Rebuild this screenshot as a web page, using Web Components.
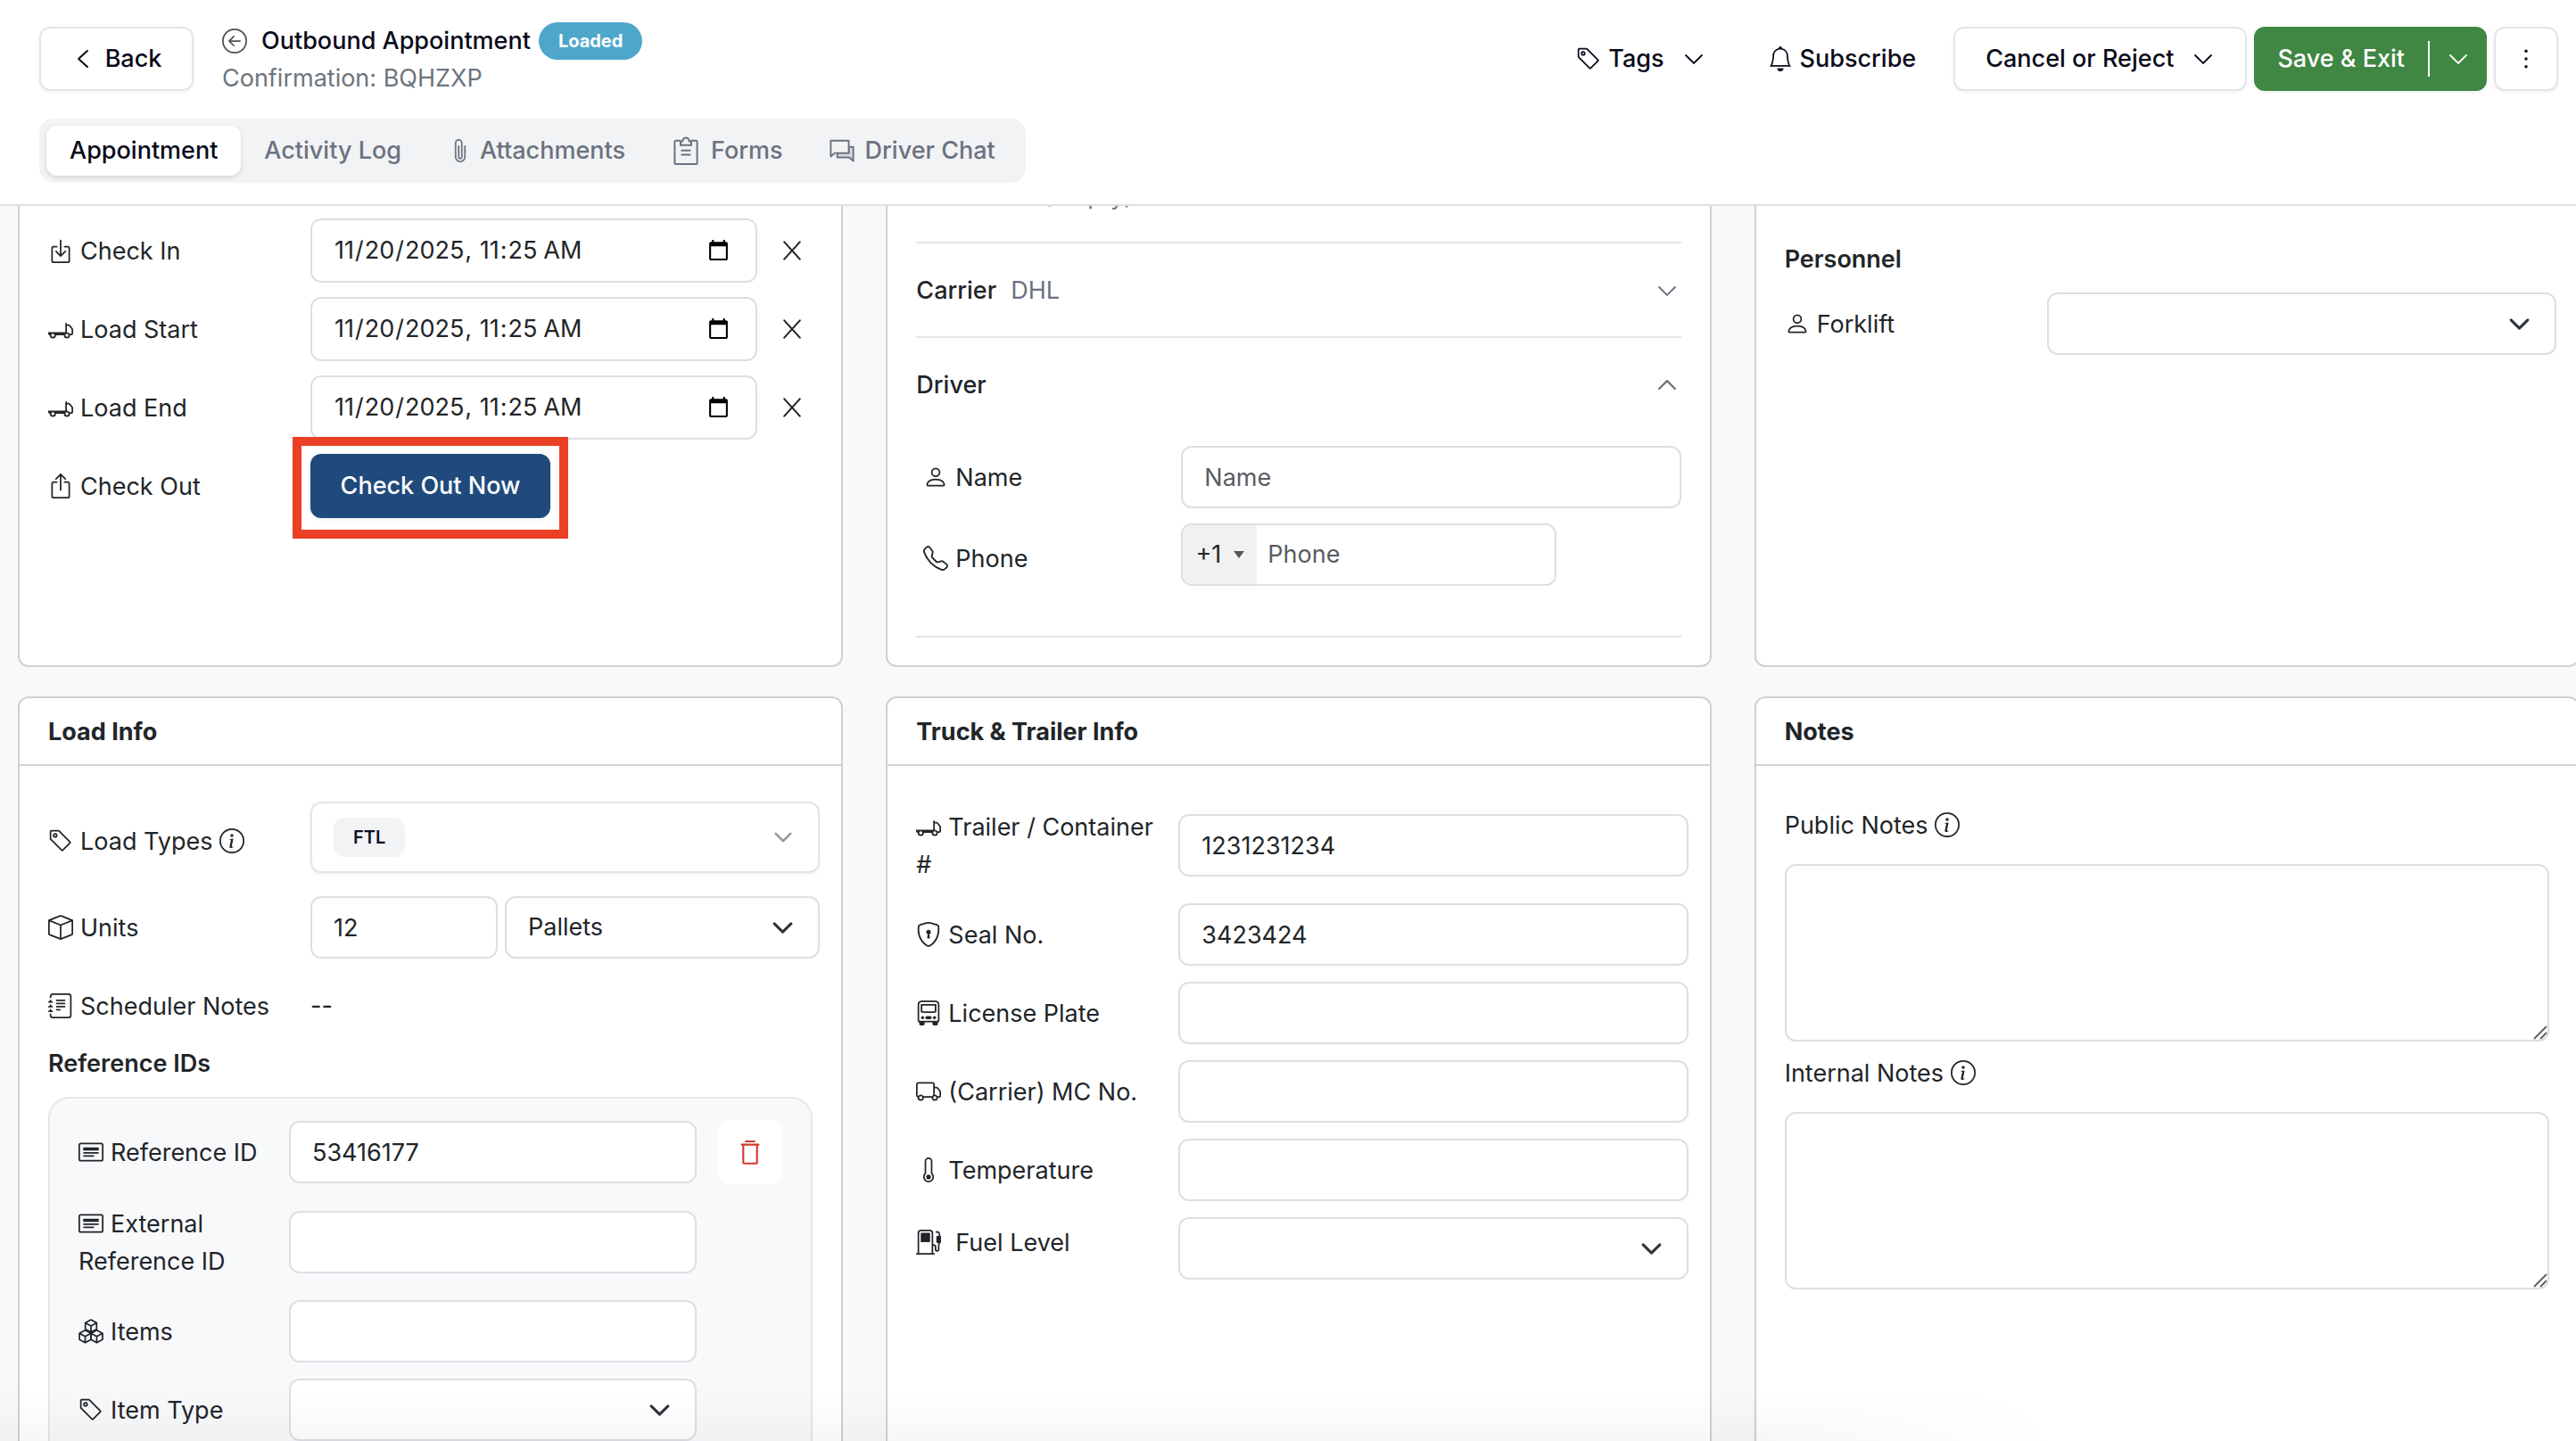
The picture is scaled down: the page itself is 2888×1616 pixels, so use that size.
<!DOCTYPE html>
<html lang="en">
<head>
<meta charset="UTF-8">
<meta name="viewport" content="width=device-width, initial-scale=1">
<title>Outbound Appointment</title>
<style>
    html, body {
        margin: 0;
        height: 100%;
    }
    body {
        --line: #dedfe4;
        --card-line: #cfd1d4;
        --muted: #6b7280;
        --ink: #212529;
        --page: #f8f9fb;
        font-family: Inter, "Liberation Sans", sans-serif;
        font-size: 27px;
        line-height: 42px;
        color: var(--ink);
        background: var(--page);
        overflow: hidden;
    }
</style>
</head>
<body>
<appointment-page></appointment-page>

<script>
    const ICONS = {
        'arrow-left-circle': '<path d="M1 8a7 7 0 1 0 14 0A7 7 0 0 0 1 8m15 0A8 8 0 1 1 0 8a8 8 0 0 1 16 0m-4.5-.5a.5.5 0 0 1 0 1H5.707l2.147 2.146a.5.5 0 0 1-.708.708l-3-3a.5.5 0 0 1 0-.708l3-3a.5.5 0 1 1 .708.708L5.707 7.5z"/>',
        'chevron-left': '<path d="M11 2.5 5 8l6 5.5" fill="none" stroke="currentColor" stroke-width="1.3" stroke-linecap="round" stroke-linejoin="round"/>',
        'chevron-down': '<path d="m2.5 5.5 5.5 5.5 5.5-5.5" fill="none" stroke="currentColor" stroke-width="1.2" stroke-linecap="round" stroke-linejoin="round"/>',
        'chevron-up': '<path d="m2.5 10.5 5.5-5.5 5.5 5.5" fill="none" stroke="currentColor" stroke-width="1.4" stroke-linecap="round" stroke-linejoin="round"/>',
        'chevron-select': '<path d="m2 5 6 6 6-6" fill="none" stroke="currentColor" stroke-width="2" stroke-linecap="round" stroke-linejoin="round"/>',
        'tag': '<path d="M6 4.5a1.5 1.5 0 1 1-3 0 1.5 1.5 0 0 1 3 0m-1 0a.5.5 0 1 0-1 0 .5.5 0 0 0 1 0"/><path d="M2 1h4.586a1 1 0 0 1 .707.293l7 7a1 1 0 0 1 0 1.414l-4.586 4.586a1 1 0 0 1-1.414 0l-7-7A1 1 0 0 1 1 6.586V2a1 1 0 0 1 1-1m0 5.586 7 7L13.586 9l-7-7H2z"/>',
        'bell': '<path d="M8 16a2 2 0 0 0 2-2H6a2 2 0 0 0 2 2M8 1.918l-.797.161A4 4 0 0 0 4 6c0 .628-.134 2.197-.459 3.742-.16.767-.376 1.566-.663 2.258h10.244c-.287-.692-.502-1.49-.663-2.258C12.134 8.197 12 6.628 12 6a4 4 0 0 0-3.203-3.92zM14.22 12c.223.447.481.801.78 1H1c.299-.199.557-.553.78-1C2.68 10.2 3 6.88 3 6c0-2.42 1.72-4.44 4.005-4.901a1 1 0 1 1 1.99 0A5 5 0 0 1 13 6c0 .88.32 4.2 1.22 6"/>',
        'dots': '<circle cx="8" cy="3" r="1"/><circle cx="8" cy="8" r="1"/><circle cx="8" cy="13" r="1"/>',
        'paperclip': '<path d="M4.5 3a2.5 2.5 0 0 1 5 0v9a1.5 1.5 0 0 1-3 0V5a.5.5 0 0 1 1 0v7a.5.5 0 0 0 1 0V3a1.5 1.5 0 1 0-3 0v9a2.5 2.5 0 0 0 5 0V5a.5.5 0 0 1 1 0v7a3.5 3.5 0 1 1-7 0z"/>',
        'clipboard': '<g fill="none" stroke="currentColor" stroke-width="1"><path d="M5.2 2.4H2.3q-.6 0-.6.6v11.9q0 .6.6.6h11.4q.6 0 .6-.6V3q0-.6-.6-.6h-2.9"/><path d="M5 4.9V3.2q0-.5.5-.5h.6Q6.5.8 8 .8t1.9 1.9h.6q.5 0 .5.5v1.7z"/><path d="M5.300 7.900h5.400M5.300 10.300h5.400"/></g>',
        'chat': '<g fill="none" stroke="currentColor" stroke-width="1.100" stroke-linejoin="round"><path d="M12.300 5.600h2.900v9l-2.500-2.300H5V9.500h7.300z" fill="#d9dbe0"/><path d="M.8 1.600h11.500v7.900H3.300L.8 11.700z" fill="#f2f3f5"/></g>',
        'box-in': '<path d="M3.5 6a.5.5 0 0 0-.5.5v8a.5.5 0 0 0 .5.5h9a.5.5 0 0 0 .5-.5v-8a.5.5 0 0 0-.5-.5h-2a.5.5 0 0 1 0-1h2A1.500 1.500 0 0 1 14 6.500v8a1.500 1.500 0 0 1-1.500 1.500h-9A1.500 1.500 0 0 1 2 14.500v-8A1.500 1.500 0 0 1 3.500 5h2a.5.5 0 0 1 0 1z"/><path d="M7.646 11.854a.5.5 0 0 0 .708 0l3-3a.5.5 0 0 0-.708-.708L8.500 10.293V1.500a.5.5 0 0 0-1 0v8.793L5.354 8.146a.5.5 0 1 0-.708.708z"/>',
        'box-out': '<path d="M3.5 6a.5.5 0 0 0-.5.5v8a.5.5 0 0 0 .5.5h9a.5.5 0 0 0 .5-.5v-8a.5.5 0 0 0-.5-.5h-2a.5.5 0 0 1 0-1h2A1.500 1.500 0 0 1 14 6.500v8a1.500 1.500 0 0 1-1.500 1.500h-9A1.500 1.500 0 0 1 2 14.500v-8A1.500 1.500 0 0 1 3.500 5h2a.5.5 0 0 1 0 1z"/><path d="M7.646.146a.5.5 0 0 1 .708 0l3 3a.5.5 0 0 1-.708.708L8.500 1.707V10.500a.5.5 0 0 1-1 0V1.707L5.354 3.854a.5.5 0 1 1-.708-.708z"/>',
        'truck-flatbed': '<path d="M11.500 4a.5.5 0 0 1 .5.5V5h1.020a1.500 1.500 0 0 1 1.170.563l1.481 1.850a1.500 1.500 0 0 1 .329.938V10.500a1.500 1.500 0 0 1-1.500 1.500H14a2 2 0 1 1-4 0H5a2 2 0 1 1-4 0 1 1 0 0 1-1-1v-1h11V4.500a.5.5 0 0 1 .5-.5M3 11a1 1 0 1 0 0 2 1 1 0 0 0 0-2m9 0a1 1 0 1 0 0 2 1 1 0 0 0 0-2m1.732 0h.768a.5.5 0 0 0 .5-.5V8.350a.5.5 0 0 0-.11-.312l-1.480-1.850A.5.5 0 0 0 13.020 6H12v4a2 2 0 0 1 1.732 1"/>',
        'truck': '<path d="M0 3.500A1.500 1.500 0 0 1 1.500 2h9A1.500 1.500 0 0 1 12 3.500V5h1.020a1.500 1.500 0 0 1 1.170.563l1.481 1.850a1.500 1.500 0 0 1 .329.938V10.500a1.500 1.500 0 0 1-1.500 1.500H14a2 2 0 1 1-4 0H5a2 2 0 1 1-3.998-.085A1.500 1.500 0 0 1 0 10.500zm1.294 7.456A2 2 0 0 1 4.732 11h5.536a2 2 0 0 1 .732-.732V3.500a.5.5 0 0 0-.5-.5h-9a.5.5 0 0 0-.5.5v7a.5.5 0 0 0 .294.456M12 10a2 2 0 0 1 1.732 1h.768a.5.5 0 0 0 .5-.5V8.350a.5.5 0 0 0-.11-.312l-1.480-1.850A.5.5 0 0 0 13.020 6H12zm-9 1a1 1 0 1 0 0 2 1 1 0 0 0 0-2m9 0a1 1 0 1 0 0 2 1 1 0 0 0 0-2"/>',
        'x': '<path d="M3 2.500 13 13.500M13 2.500 3 13.500" fill="none" stroke="currentColor" stroke-width="1.200" stroke-linecap="round"/>',
        'person': '<path d="M8 8a3 3 0 1 0 0-6 3 3 0 0 0 0 6m2-3a2 2 0 1 1-4 0 2 2 0 0 1 4 0m4 8c0 1-1 1-1 1H3s-1 0-1-1 1-4 6-4 6 3 6 4m-1-.004c-.001-.246-.154-.986-.832-1.664C11.516 10.680 10.289 10 8 10s-3.516.680-4.168 1.332c-.678.678-.830 1.418-.832 1.664z"/>',
        'telephone': '<path d="M3.654 1.328a.678.678 0 0 0-1.015-.063L1.605 2.300c-.483.484-.661 1.169-.450 1.770a17.600 17.600 0 0 0 4.168 6.608 17.600 17.600 0 0 0 6.608 4.168c.601.211 1.286.033 1.770-.450l1.034-1.034a.678.678 0 0 0-.063-1.015l-2.307-1.794a.680.680 0 0 0-.580-.122l-2.190.547a1.750 1.750 0 0 1-1.657-.459L5.482 8.062a1.750 1.750 0 0 1-.460-1.657l.548-2.190a.680.680 0 0 0-.122-.580zM1.884.511a1.745 1.745 0 0 1 2.612.163L6.290 2.980c.329.423.445.974.315 1.494l-.547 2.190a.680.680 0 0 0 .178.643l2.457 2.457a.680.680 0 0 0 .644.178l2.189-.547a1.750 1.750 0 0 1 1.494.315l2.306 1.794c.829.645.905 1.870.163 2.611l-1.034 1.034c-.740.740-1.846 1.065-2.877.702a18.600 18.600 0 0 1-7.010-4.420 18.600 18.600 0 0 1-4.420-7.009c-.362-1.030-.037-2.137.703-2.877z"/>',
        'info': '<path d="M8 15A7 7 0 1 1 8 1a7 7 0 0 1 0 14m0 1A8 8 0 1 0 8 0a8 8 0 0 0 0 16"/><path d="m8.930 6.588-2.290.287-.082.380.450.083c.294.070.352.176.288.469l-.738 3.468c-.194.897.105 1.319.808 1.319.545 0 1.178-.252 1.465-.598l.088-.416c-.200.176-.492.246-.686.246-.275 0-.375-.193-.304-.533zM9 4.500a1 1 0 1 1-2 0 1 1 0 0 1 2 0"/>',
        'box': '<path d="M8.186 1.113a.5.5 0 0 0-.372 0L1.846 3.500 8 5.961 14.154 3.500zM15 4.239l-6.500 2.600v7.922l6.500-2.600V4.240zM7.500 14.762V6.838L1 4.239v7.923zM7.443.184a1.500 1.500 0 0 1 1.114 0l7.129 2.852A.5.5 0 0 1 16 3.500v8.662a1 1 0 0 1-.629.928l-7.185 2.874a.5.5 0 0 1-.372 0L.630 13.090a1 1 0 0 1-.630-.928V3.500a.5.5 0 0 1 .314-.464z"/>',
        'journal': '<path d="M3 0h10a2 2 0 0 1 2 2v12a2 2 0 0 1-2 2H3a2 2 0 0 1-2-2v-1h1v1a1 1 0 0 0 1 1h10a1 1 0 0 0 1-1V2a1 1 0 0 0-1-1H3a1 1 0 0 0-1 1v1H1V2a2 2 0 0 1 2-2"/><path d="M1 5v-.5a.5.5 0 0 1 1 0V5h.5a.5.5 0 0 1 0 1h-2a.5.5 0 0 1 0-1zm0 3v-.5a.5.5 0 0 1 1 0V8h.5a.5.5 0 0 1 0 1h-2a.5.5 0 0 1 0-1zm0 3v-.5a.5.5 0 0 1 1 0v.5h.5a.5.5 0 0 1 0 1h-2a.5.5 0 0 1 0-1z"/><path d="M5.500 4.500h5M5.500 6.500h5M5.500 8.500h5M5.500 10.500h2" fill="none" stroke="currentColor" stroke-linecap="round"/>',
        'card': '<path d="M14.500 3a.5.5 0 0 1 .5.5v9a.5.5 0 0 1-.5.5h-13a.5.5 0 0 1-.5-.5v-9a.5.5 0 0 1 .5-.5zm-13-1A1.500 1.500 0 0 0 0 3.500v9A1.500 1.500 0 0 0 1.500 14h13a1.500 1.500 0 0 0 1.500-1.500v-9A1.500 1.500 0 0 0 14.500 2z"/><path d="M3 8.500a.5.5 0 0 1 .5-.5h9a.5.5 0 0 1 0 1h-9a.5.5 0 0 1-.5-.5m0 2a.5.5 0 0 1 .5-.5h6a.5.5 0 0 1 0 1h-6a.5.5 0 0 1-.5-.5m0-5a.5.5 0 0 1 .5-.5h9a.5.5 0 0 1 .5.5v1a.5.5 0 0 1-.5.5h-9a.5.5 0 0 1-.5-.5z"/>',
        'boxes': '<g fill="none" stroke="currentColor" stroke-width="1" stroke-linejoin="round"><path d="M8 .6 11.600 2.600v4L8 8.600 4.400 6.600v-4zM4.400 2.600 8 4.600l3.600-2M8 4.600v4"/><path d="M4.300 7.300 8 9.300v4l-3.700 2-3.700-2v-4zM.6 9.300l3.700 2L8 9.300M4.300 11.300v4"/><path d="m11.700 7.300 3.700 2v4l-3.700 2-3.700-2v-4zM8 9.300l3.700 2 3.700-2M11.700 11.300v4"/></g>',
        'trash': '<path d="M5.200 1.100h5.600M2.600 3.200h10.800M3.600 3.400v11.400q0 .5.5.5h7.800q.5 0 .5-.5V3.400" fill="none" stroke="currentColor" stroke-width="1.200" stroke-linecap="round"/>',
        'shield': '<path d="M5.338 1.590a61 61 0 0 0-2.837.856.480.480 0 0 0-.328.390c-.554 4.157.726 7.190 2.253 9.188a10.700 10.700 0 0 0 2.287 2.233c.346.244.652.420.893.533q.180.085.293.118a1 1 0 0 0 .101.025 1 1 0 0 0 .1-.025q.114-.034.294-.118c.240-.113.547-.290.893-.533a10.700 10.700 0 0 0 2.287-2.233c1.527-1.997 2.807-5.031 2.253-9.188a.480.480 0 0 0-.328-.390c-.651-.213-1.750-.560-2.837-.855C9.552 1.290 8.531 1.067 8 1.067c-.530 0-1.552.223-2.662.524zM5.072.560C6.157.265 7.310 0 8 0s1.843.265 2.928.560c1.110.300 2.229.655 2.887.870a1.540 1.540 0 0 1 1.044 1.262c.596 4.477-.787 7.795-2.465 9.990a11.800 11.800 0 0 1-2.517 2.453 7 7 0 0 1-1.048.625c-.280.132-.581.240-.829.240s-.548-.108-.829-.240a7 7 0 0 1-1.048-.625 11.800 11.800 0 0 1-2.517-2.453C1.928 10.487.545 7.169 1.141 2.692A1.540 1.540 0 0 1 2.185 1.430 63 63 0 0 1 5.072.560"/><path d="M9.500 6.500a1.500 1.500 0 0 1-1 1.415l.385 1.990a.5.5 0 0 1-.491.595h-.788a.5.5 0 0 1-.490-.595l.384-1.990a1.500 1.500 0 1 1 2-1.415"/>',
        'bus': '<path d="M3.600.5h8.800q2.100.2 2.100 2.500v9.500q0 1-1 1h-11q-1 0-1-1V3Q1.500.7 3.600.5z" fill="none" stroke="currentColor"/><path d="M3.500 2.800h9v4.400q-4.500.7-9 0z" fill="none" stroke="currentColor"/><circle cx="4.200" cy="11" r="1"/><circle cx="11.800" cy="11" r="1"/><rect x="6" y="10" width="4" height="2" rx="1"/><path d="M2 13.500h3.500V15q0 1-1 1H3q-1 0-1-1zM10.500 13.500H14V15q0 1-1 1h-1.500q-1 0-1-1z"/>',
        'thermometer': '<path d="M9.500 12.500a1.500 1.500 0 1 1-3 0 1.500 1.500 0 0 1 3 0"/><path d="M8 0a2.500 2.500 0 0 0-2.500 2.500v7.550a3.500 3.500 0 1 0 5 0V2.500A2.500 2.500 0 0 0 8 0M6.500 2.500a1.500 1.500 0 1 1 3 0v7.987l.167.150a2.500 2.500 0 1 1-3.333 0l.166-.150z"/>',
        'fuel': '<path d="M1.500 15.500V2.200Q1.500.5 3.200.5h5.600q1.700 0 1.700 1.700v13.300M.5 15.500h11" fill="none" stroke="currentColor" stroke-linecap="round"/><rect x="3" y="2" width="6" height="6" rx=".5"/><path d="M13 1.500h1q1 .2 1 1.500v5q0 1-.5 1.600v3q0 1-1 1t-1-1V11q0-1-1.500-1.200" fill="none" stroke="currentColor" stroke-linecap="round"/><rect x="13" y="4" width="3" height="4.500" rx=".6"/>'
    };

    class AppIcon extends HTMLElement {
        constructor() {
            super();
            this.attachShadow({ mode: 'open' });
        }
        connectedCallback() {
            this.shadowRoot.innerHTML = `
                <style>
                    :host {
                        display: inline-block;
                        flex: none;
                        width: 28px;
                        height: 28px;
                        vertical-align: -4px;
                    }
                    svg {
                        display: block;
                        width: 100%;
                        height: 100%;
                        fill: currentColor;
                    }
                </style>
                <svg viewBox="0 0 16 16" aria-hidden="true">${ICONS[this.getAttribute('name')]}</svg>
            `;
        }
    }
    customElements.define('app-icon', AppIcon);

    class AppButton extends HTMLElement {
        constructor() {
            super();
            this.attachShadow({ mode: 'open' });
        }
        connectedCallback() {
            const name = this.getAttribute('label');
            this.shadowRoot.innerHTML = `
                <style>
                    :host { display: block; }
                    button {
                        display: flex;
                        align-items: center;
                        justify-content: center;
                        gap: 8px;
                        box-sizing: border-box;
                        width: 100%;
                        height: 72px;
                        padding: 0 34px;
                        border: 2px solid #e4e5ea;
                        border-radius: 12px;
                        background: #fff;
                        box-shadow: 0 2px 4px rgba(0, 0, 0, 0.05);
                        font: inherit;
                        font-weight: 500;
                        color: #090b1a;
                        white-space: nowrap;
                    }
                    :host([kind="plain"]) button {
                        padding: 0 16px;
                        border-color: transparent;
                        background: none;
                        box-shadow: none;
                    }
                    :host([kind="primary"]) button {
                        padding: 0;
                        border-color: #1f4a7b;
                        background: #1f4a7b;
                        color: #fff;
                    }
                    :host([kind="icon"]) button {
                        width: 72px;
                        padding: 0;
                    }
                    :host([kind="danger"]) button {
                        width: 72px;
                        padding: 0;
                        border-color: #fff;
                        box-shadow: none;
                        color: #d13a32;
                    }
                </style>
                <button type="button" ${name ? `aria-label="${name}"` : ''}><slot></slot></button>
            `;
        }
    }
    customElements.define('app-button', AppButton);

    class SplitButton extends HTMLElement {
        constructor() {
            super();
            this.attachShadow({ mode: 'open' });
        }
        connectedCallback() {
            this.shadowRoot.innerHTML = `
                <style>
                    :host {
                        display: flex;
                        align-items: center;
                        height: 72px;
                        border-radius: 12px;
                        background: #3f8743;
                        box-shadow: 0 2px 4px rgba(0, 0, 0, 0.05);
                    }
                    button {
                        display: flex;
                        align-items: center;
                        justify-content: center;
                        height: 72px;
                        border: 0;
                        background: none;
                        font: inherit;
                        font-weight: 500;
                        color: #fff;
                        white-space: nowrap;
                    }
                    .main { padding: 0 26px; }
                    .more { width: 64px; padding: 0; }
                    i {
                        width: 2px;
                        height: 40px;
                        background: #fff;
                    }
                    app-icon { width: 26px; height: 26px; }
                </style>
                <button class="main" type="button"><slot></slot></button>
                <i></i>
                <button class="more" type="button" aria-label="More save options"><app-icon name="chevron-down"></app-icon></button>
            `;
        }
    }
    customElements.define('split-button', SplitButton);

    class PageHeader extends HTMLElement {
        constructor() {
            super();
            this.attachShadow({ mode: 'open' });
        }
        connectedCallback() {
            this.shadowRoot.innerHTML = `
                <style>
                    :host {
                        display: block;
                        box-sizing: border-box;
                        flex: none;
                        padding: 24px 20px 24px 44px;
                        border-bottom: 2px solid var(--line);
                        background: #fff;
                    }
                    .top {
                        display: flex;
                        align-items: center;
                        gap: 32px;
                        height: 84px;
                    }
                    .title {
                        flex: 1;
                        min-width: 0;
                        padding-top: 2px;
                    }
                    h1 {
                        display: flex;
                        align-items: center;
                        margin: 0;
                        font-size: inherit;
                        font-weight: 500;
                        color: #090b1a;
                    }
                    h1 app-icon {
                        margin-right: 16px;
                        color: #4b5057;
                    }
                    .badge {
                        margin-left: 9px;
                        padding: 0 22px;
                        border-radius: 21px;
                        background: #4ea6cb;
                        font-size: 20px;
                        font-weight: 700;
                        color: #fff;
                    }
                    .title p {
                        margin: 0;
                        color: #6c757d;
                    }
                    .actions {
                        display: flex;
                        gap: 8px;
                    }
                    .tags { margin-right: 26px; }
                    .subscribe { margin-right: 16px; }
                    .chev {
                        width: 26px;
                        height: 26px;
                        margin-left: 12px;
                    }
                    .back { width: 173px; }
                    .back app-icon {
                        width: 26px;
                        height: 26px;
                        margin-right: 4px;
                    }
                    nav {
                        display: inline-flex;
                        box-sizing: border-box;
                        margin-top: 25px;
                        padding: 8px;
                        border-radius: 16px;
                        background: #f2f3f5;
                    }
                    nav a {
                        display: flex;
                        align-items: center;
                        gap: 8px;
                        height: 56px;
                        padding: 0 26px;
                        border-radius: 12px;
                        font-weight: 500;
                        color: var(--muted);
                        text-decoration: none;
                    }
                    nav a[aria-current] {
                        background: #fff;
                        box-shadow: 0 2px 5px rgba(0, 0, 0, 0.14);
                        color: #090b1a;
                    }
                    nav .wide { gap: 12px; }
                    nav .big {
                        width: 32px;
                        height: 32px;
                    }
                </style>
                <div class="top">
                    <app-button class="back"><app-icon name="chevron-left"></app-icon>Back</app-button>
                    <div class="title">
                        <h1><app-icon name="arrow-left-circle"></app-icon>Outbound Appointment<span class="badge">Loaded</span></h1>
                        <p>Confirmation: BQHZXP</p>
                    </div>
                    <div class="actions">
                        <app-button kind="plain" class="tags"><app-icon name="tag"></app-icon>Tags<app-icon class="chev" name="chevron-down"></app-icon></app-button>
                        <app-button kind="plain" class="subscribe"><app-icon name="bell"></app-icon>Subscribe</app-button>
                        <app-button>Cancel or Reject<app-icon class="chev" name="chevron-down"></app-icon></app-button>
                        <split-button>Save &amp; Exit</split-button>
                        <app-button kind="icon" label="More actions"><app-icon name="dots"></app-icon></app-button>
                    </div>
                </div>
                <nav>
                    <a href="#appointment" aria-current="page">Appointment</a>
                    <a href="#activity">Activity Log</a>
                    <a href="#attachments"><app-icon name="paperclip"></app-icon>Attachments</a>
                    <a href="#forms" class="wide"><app-icon class="big" name="clipboard"></app-icon>Forms</a>
                    <a href="#chat" class="wide"><app-icon name="chat"></app-icon>Driver Chat</a>
                </nav>
            `;
        }
    }
    customElements.define('page-header', PageHeader);

    class InfoCard extends HTMLElement {
        constructor() {
            super();
            this.attachShadow({ mode: 'open' });
        }
        connectedCallback() {
            const title = this.getAttribute('heading');
            this.shadowRoot.innerHTML = `
                <style>
                    :host {
                        display: block;
                        box-sizing: border-box;
                        min-width: 0;
                        border: 2px solid var(--card-line);
                        border-radius: 12px;
                        background: #fff;
                    }
                    h2 {
                        margin: 0;
                        padding: 17px 32px 15px;
                        border-bottom: 2px solid var(--card-line);
                        font-size: inherit;
                        font-weight: 700;
                    }
                    .body {
                        display: flex;
                        flex-direction: column;
                        gap: var(--card-gap, 18px);
                        padding: var(--card-padding, 40px 24px 40px 32px);
                    }
                </style>
                ${title ? `<h2>${title}</h2>` : ''}
                <div class="body"><slot></slot></div>
            `;
        }
    }
    customElements.define('info-card', InfoCard);

    // One label + control line; "type" picks the control, "clear" adds the X button
    class FieldRow extends HTMLElement {
        constructor() {
            super();
            this.attachShadow({ mode: 'open' });
        }
        control() {
            const value = this.getAttribute('value') || '';
            const hint = this.getAttribute('placeholder') || '';
            switch (this.getAttribute('type')) {
                case 'datetime':
                    return `<input id="field" type="datetime-local" value="${value}">`;
                case 'select':
                    return `<span class="select"><select id="field"><option>${value}</option></select><app-icon name="chevron-select"></app-icon></span>`;
                case 'units':
                    return `<input id="field" class="count" type="text" value="${value}">
                        <span class="select"><select aria-label="Unit type"><option>Pallets</option></select><app-icon name="chevron-select"></app-icon></span>`;
                case 'chips':
                    return `<button id="field" class="chips" type="button"><span class="chip">${value}</span><app-icon name="chevron-select"></app-icon></button>`;
                case 'phone':
                    return `<span class="phone"><button type="button" aria-label="Country code">+1<i></i></button><input id="field" type="tel" placeholder="${hint}"></span>`;
                case 'text':
                    return `<output id="field">${value}</output>`;
                case 'slot':
                    return '<slot></slot>';
                default:
                    return `<input id="field" type="text" value="${value}" placeholder="${hint}">`;
            }
        }
        render() {
            const info = this.hasAttribute('info') ? ' <app-icon class="info" name="info"></app-icon>' : '';
            const clear = this.hasAttribute('clear')
                ? '<button class="clear" type="button" aria-label="Clear"><app-icon name="x"></app-icon></button>' : '';
            this.shadowRoot.innerHTML = `
                <style>
                    :host {
                        display: flex;
                        align-items: center;
                        min-height: 70px;
                    }
                    label {
                        box-sizing: border-box;
                        flex: none;
                        width: var(--label-width, 294px);
                        padding: 6px 16px 4px 0;
                    }
                    label app-icon { margin-right: 8px; }
                    label .info { margin: 0; }
                    .controls {
                        display: flex;
                        align-items: center;
                        gap: 8px;
                        flex: 1;
                        min-width: 0;
                    }
                    input, select, .chips, .phone {
                        box-sizing: border-box;
                        width: 100%;
                        min-width: 0;
                        height: 70px;
                        margin: 0;
                        padding: 0 24px;
                        border: 2px solid var(--line);
                        border-radius: 12px;
                        background: #fff;
                        font: inherit;
                        color: inherit;
                    }
                    input::placeholder {
                        color: #595c5f;
                        opacity: 1;
                    }
                    input[type="datetime-local"] {
                        height: 72px;
                        padding-right: 26px;
                    }
                    select { appearance: none; }
                    .count { width: 210px; flex: none; }
                    .select {
                        position: relative;
                        display: block;
                        flex: 1;
                        min-width: 0;
                    }
                    .select app-icon {
                        position: absolute;
                        top: 23px;
                        right: 29px;
                        width: 25px;
                        height: 25px;
                        color: #30363c;
                        pointer-events: none;
                    }
                    .chips {
                        display: flex;
                        align-items: center;
                        justify-content: space-between;
                        height: 80px;
                        border-color: #e4e5ea;
                        box-shadow: 0 2px 4px rgba(0, 0, 0, 0.05);
                    }
                    .chips app-icon {
                        width: 22px;
                        height: 22px;
                        margin-right: 4px;
                        color: #999;
                    }
                    .chip {
                        padding: 1px 22px;
                        border-radius: 12px;
                        background: #f2f3f5;
                        font-size: 20px;
                        font-weight: 600;
                        color: #0b1026;
                    }
                    .phone {
                        display: flex;
                        width: 75%;
                        padding: 0;
                        overflow: hidden;
                    }
                    .phone button {
                        display: flex;
                        align-items: center;
                        justify-content: center;
                        gap: 14px;
                        flex: none;
                        width: 83px;
                        padding: 0;
                        border: 0;
                        background: #f1f1f1;
                        font: inherit;
                        color: inherit;
                    }
                    .phone i {
                        border: 6px solid transparent;
                        border-top: 8px solid #555;
                        border-bottom: 0;
                    }
                    .phone input {
                        flex: 1;
                        height: auto;
                        padding: 0 12px;
                        border: 0;
                    }
                    .clear {
                        flex: none;
                        width: 50px;
                        height: 50px;
                        margin: 0 6px;
                        padding: 0;
                        border: 0;
                        background: none;
                        color: inherit;
                    }
                    :host([align="top"]) label {
                        align-self: flex-start;
                        padding-top: 8px;
                    }
                    :host([align="top"]) label app-icon { margin-right: 16px; }
                    :host([align="low"]) { min-height: 78px; }
                    :host([type="chips"]) { min-height: 88px; }
                    :host([type="chips"]) .controls,
                    :host([align="low"]) .controls { align-self: flex-start; }
                    :host([trailing]) .controls { margin-right: 96px; }
                    :host([action]) .controls { margin-right: 24px; }
                </style>
                <label for="field"><app-icon name="${this.getAttribute('icon')}"></app-icon>${this.getAttribute('label')}${info}</label>
                <div class="controls">${this.control()}${clear}</div>
                <slot name="action"></slot>
            `;
        }
        connectedCallback() {
            this.render();
        }
    }
    customElements.define('field-row', FieldRow);

    class PartySection extends HTMLElement {
        constructor() {
            super();
            this.attachShadow({ mode: 'open' });
        }
        connectedCallback() {
            const open = this.hasAttribute('open');
            this.shadowRoot.innerHTML = `
                <style>
                    :host {
                        display: block;
                        border-bottom: 2px solid #e4e5ea;
                    }
                    button {
                        display: flex;
                        align-items: center;
                        gap: 16px;
                        box-sizing: border-box;
                        width: 100%;
                        height: 104px;
                        padding: 2px 0 0;
                        border: 0;
                        background: none;
                        font: inherit;
                        color: inherit;
                    }
                    b { font-weight: 500; }
                    span { color: var(--muted); }
                    app-icon {
                        width: 26px;
                        height: 26px;
                        margin: 0 3px 0 auto;
                        color: var(--muted);
                    }
                    .fields {
                        display: flex;
                        flex-direction: column;
                        gap: 17px;
                        padding: 17px 0 48px 8px;
                        --label-width: 289px;
                    }
                </style>
                <button type="button" aria-expanded="${open}"><b>${this.getAttribute('label')}</b><span>${this.getAttribute('value') || ''}</span><app-icon name="chevron-${open ? 'up' : 'down'}"></app-icon></button>
                ${open ? '<div class="fields"><slot></slot></div>' : ''}
            `;
        }
    }
    customElements.define('party-section', PartySection);

    class NoteField extends HTMLElement {
        constructor() {
            super();
            this.attachShadow({ mode: 'open' });
        }
        connectedCallback() {
            this.shadowRoot.innerHTML = `
                <style>
                    :host { display: block; }
                    label { display: block; }
                    .box {
                        position: relative;
                        margin-top: 22px;
                    }
                    textarea {
                        display: block;
                        box-sizing: border-box;
                        width: 100%;
                        height: 199px;
                        padding: 12px 24px;
                        border: 2px solid var(--line);
                        border-radius: 12px;
                        background: #fff;
                        font: inherit;
                        color: inherit;
                        resize: none;
                    }
                    svg {
                        position: absolute;
                        right: 2px;
                        bottom: 2px;
                        width: 16px;
                        height: 16px;
                        stroke: #5f6368;
                        stroke-width: 2;
                    }
                </style>
                <label for="note">${this.getAttribute('label')} <app-icon name="info"></app-icon></label>
                <div class="box">
                    <textarea id="note"></textarea>
                    <svg viewBox="0 0 16 16" aria-hidden="true"><path d="M1 15 15 1M8 15l7-7" fill="none"/></svg>
                </div>
            `;
        }
    }
    customElements.define('note-field', NoteField);

    class AppointmentPage extends HTMLElement {
        constructor() {
            super();
            this.attachShadow({ mode: 'open' });
        }
        connectedCallback() {
            this.shadowRoot.innerHTML = `
                <style>
                    :host {
                        display: flex;
                        flex-direction: column;
                        height: 100vh;
                        overflow: hidden;
                    }
                    main {
                        position: relative;
                        flex: 1;
                        min-height: 0;
                        overflow: hidden;
                    }
                    /* content sits scrolled up under the header */
                    .grid {
                        display: grid;
                        grid-template-columns: repeat(3, minmax(0, 1fr));
                        grid-template-rows: auto minmax(1000px, auto);
                        gap: 33px 48px;
                        margin: -80px -4px 0 20px;
                    }
                    .times {
                        --card-padding: 92px 24px 24px 32px;
                        --card-gap: 16px;
                    }
                    .parties {
                        --card-padding: 14px 32px 31px;
                        --card-gap: 0;
                    }
                    .people {
                        --card-padding: 117px 24px 24px 32px;
                        --card-gap: 16px;
                    }
                    .notes {
                        --card-padding: 46px 32px 32px;
                        --card-gap: 15px;
                    }
                    .truck { --card-padding: 42px 24px 32px 32px; }
                    h3 {
                        margin: 0;
                        font-size: inherit;
                        font-weight: 600;
                    }
                    .load h3 { margin: -9px 0 -2px; }
                    .highlight {
                        position: relative;
                        width: 269px;
                    }
                    .highlight::after {
                        content: "";
                        position: absolute;
                        inset: -19px -20px -23px;
                        border: 10px solid #ea4025;
                        pointer-events: none;
                    }
                    .panel {
                        display: flex;
                        flex-direction: column;
                        gap: 18px;
                        margin-right: 8px;
                        padding: 24px 32px;
                        border: 2px solid #e4e6ea;
                        border-radius: 24px;
                        background: var(--page);
                        --label-width: 236px;
                    }
                    .shade {
                        position: absolute;
                        inset: auto 20% 0 0;
                        height: 60px;
                        background: linear-gradient(rgba(0, 0, 0, 0), rgba(0, 0, 0, 0.03));
                        -webkit-mask-image: linear-gradient(90deg, #000 85%, transparent);
                        mask-image: linear-gradient(90deg, #000 85%, transparent);
                        pointer-events: none;
                    }
                </style>
                <page-header></page-header>
                <main>
                    <div class="grid">
                        <info-card class="times">
                            <field-row icon="box-in" label="Check In" type="datetime" value="2025-11-20T11:25" clear></field-row>
                            <field-row icon="truck-flatbed" label="Load Start" type="datetime" value="2025-11-20T11:25" clear></field-row>
                            <field-row icon="truck-flatbed" label="Load End" type="datetime" value="2025-11-20T11:25" clear></field-row>
                            <field-row icon="box-out" label="Check Out" type="slot">
                                <div class="highlight"><app-button kind="primary">Check Out Now</app-button></div>
                            </field-row>
                        </info-card>
                        <info-card class="parties">
                            <party-section label="Customer" value="(Empty)"></party-section>
                            <party-section label="Carrier" value="DHL"></party-section>
                            <party-section label="Driver" open>
                                <field-row icon="person" label="Name" placeholder="Name"></field-row>
                                <field-row icon="telephone" label="Phone" type="phone" placeholder="Phone" align="low"></field-row>
                            </party-section>
                        </info-card>
                        <info-card class="people">
                            <h3>Personnel</h3>
                            <field-row icon="person" label="Forklift" type="select"></field-row>
                        </info-card>
                        <info-card class="load" heading="Load Info">
                            <field-row icon="tag" label="Load Types" type="chips" value="FTL" info></field-row>
                            <field-row icon="box" label="Units" type="units" value="12"></field-row>
                            <field-row icon="journal" label="Scheduler Notes" type="text" value="--"></field-row>
                            <h3>Reference IDs</h3>
                            <div class="panel">
                                <field-row icon="card" label="Reference ID" value="53416177" action>
                                    <app-button slot="action" kind="danger" label="Delete reference"><app-icon name="trash"></app-icon></app-button>
                                </field-row>
                                <field-row icon="card" label="External Reference ID" trailing></field-row>
                                <field-row icon="boxes" label="Items" trailing></field-row>
                                <field-row icon="tag" label="Item Type" type="select" trailing></field-row>
                            </div>
                        </info-card>
                        <info-card class="truck" heading="Truck &amp; Trailer Info">
                            <field-row icon="truck-flatbed" label="Trailer / Container #" value="1231231234"></field-row>
                            <field-row icon="shield" label="Seal No." value="3423424"></field-row>
                            <field-row icon="bus" label="License Plate"></field-row>
                            <field-row icon="truck" label="(Carrier) MC No."></field-row>
                            <field-row icon="thermometer" label="Temperature"></field-row>
                            <field-row icon="fuel" label="Fuel Level" type="select" align="top"></field-row>
                        </info-card>
                        <info-card class="notes" heading="Notes">
                            <note-field label="Public Notes"></note-field>
                            <note-field label="Internal Notes"></note-field>
                        </info-card>
                    </div>
                    <div class="shade"></div>
                </main>
            `;
        }
    }
    customElements.define('appointment-page', AppointmentPage);
</script>
</body>
</html>
